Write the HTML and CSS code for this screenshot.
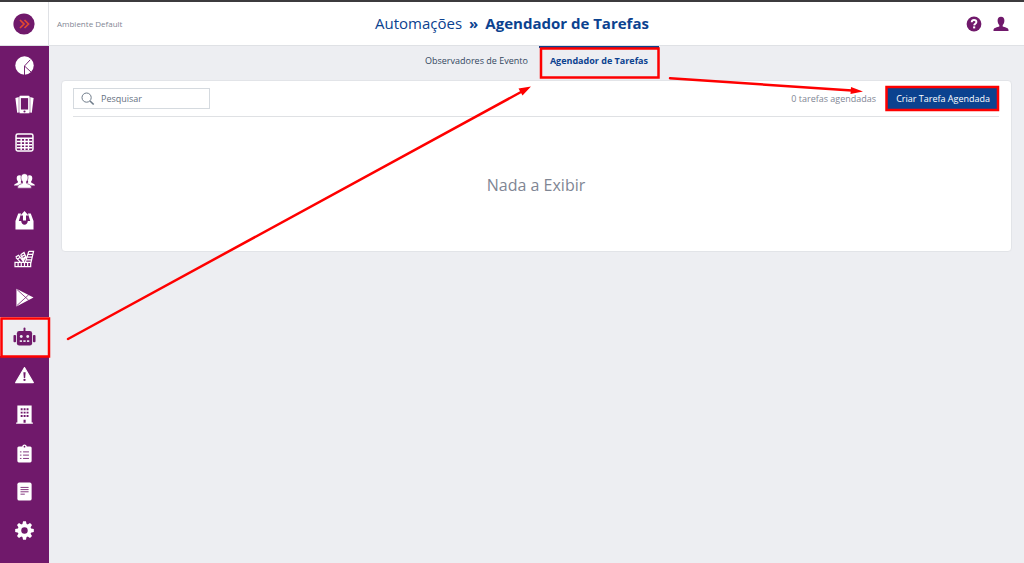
FILE: index.html
```html
<!DOCTYPE html>
<html lang="pt-BR">
<head>
<meta charset="utf-8">
<meta name="viewport" content="width=device-width, initial-scale=1">
<title>Automações » Agendador de Tarefas</title>
<link rel="stylesheet" href="styles.css">
</head>
<body>
<div class="app">
  <header class="topbar">
    <a class="logo" href="#" aria-label="Início">
      <svg width="22" height="22" viewBox="0 0 22 22"><circle cx="11" cy="11" r="10.6" fill="#70196b"/><path d="M7 7l4 4-4 4M11.500 7l4 4-4 4" fill="none" stroke="#e2492f" stroke-width="1.700"/></svg>
    </a>
    <span class="environment">Ambiente Default</span>
    <h1 class="title"><span>Automações</span><b>»</b><b>Agendador de Tarefas</b></h1>
    <div class="account">
      <button class="icon-button" aria-label="Ajuda">
        <svg width="16" height="16" viewBox="0 0 16 16"><circle cx="8" cy="8" r="7.400" fill="#70196b"/><path d="M5.700 6.200C5.800 4.700 6.700 4 8 4c1.400 0 2.400.8 2.400 2.100 0 1.700-2.100 1.700-2.200 3.300" fill="none" stroke="#fff" stroke-width="1.900"/><rect x="7.100" y="10.400" width="2.100" height="2" fill="#fff"/></svg>
      </button>
      <button class="icon-button" aria-label="Minha conta">
        <svg width="16" height="16" viewBox="0 0 16 16"><path d="M8 .8c2.300 0 3.400 1.400 3.400 3.700 0 2-.8 3.500-1.700 4.500v1.500c1.800.8 5.800 1.200 5.800 3.500v1H.5v-1c0-2.300 4-2.700 5.800-3.500V9C5.400 8 4.600 6.500 4.600 4.500 4.600 2.200 5.700.8 8 .8z" fill="#70196b"/></svg>
      </button>
    </div>
  </header>

  <nav class="sidebar" aria-label="Principal">
    <a class="nav-item" href="#" aria-label="Painel"><svg viewBox="0 0 20 20"><circle cx="10" cy="10" r="9.700" fill="#fff"/><path d="M10 20v-9.500L16 4M10.500 11l6.500 6" fill="none" stroke="#70196b" stroke-width="1"/></svg></a>
    <a class="nav-item" href="#" aria-label="Dispositivos"><svg viewBox="0 0 20 20"><path d="M.4 3.200L4.200 2v16.300l-1.900.4zM19.600 3.200L15.800 2v16.300l1.900.4z" fill="#fff"/><rect x="4.200" y=".4" width="11.600" height="19.200" rx="1.800" fill="#fff" stroke="#70196b" stroke-width=".5"/><rect x="6.200" y="3.300" width="7.600" height="12" fill="#70196b"/><circle cx="10" cy="17.400" r="1.100" fill="#70196b"/></svg></a>
    <a class="nav-item" href="#" aria-label="Tabelas"><svg viewBox="0 0 20 20"><rect x="1.100" y="1.100" width="17.800" height="17.800" rx="1.800" fill="none" stroke="#fff" stroke-width="1.600"/><path d="M1 5.600h18M2 9h16M2 12.300h16M2 15.600h16M6.500 5.500V18M10.300 5.500V18M14.200 5.500V18" stroke="#fff" stroke-width="1.500"/></svg></a>
    <a class="nav-item" href="#" aria-label="Usuários"><svg class="wide" viewBox="0 0 22 20"><g fill="#fff"><path d="M5.600 3.500c1.900 0 2.800 1.200 2.800 3 0 1.600-.6 2.600-1.200 3.300V11c1 .7 3.100 1 3.100 3.300H0c0-2.100 3-2.300 4-3.300V9.800C3.400 9.100 2.800 8.100 2.800 6.500c0-1.800.9-3 2.800-3z"/><path d="M16.400 3.500c-1.900 0-2.800 1.200-2.800 3 0 1.600.6 2.600 1.200 3.300V11c-1 .7-3.100 1-3.100 3.300H22c0-2.100-3-2.300-4-3.300V9.800c.6-.7 1.200-1.700 1.200-3.300 0-1.800-.9-3-2.800-3z"/><path d="M11 1.800c2.500 0 3.700 1.600 3.700 4 0 2-.8 3.400-1.600 4.200v1.800c1.300 1 5.100 1.300 5.100 4v1.200H3.800v-1.200c0-2.700 3.800-3 5.100-4V10c-.8-.8-1.600-2.200-1.600-4.200 0-2.400 1.200-4 3.700-4z" stroke="#70196b" stroke-width=".6"/></g></svg></a>
    <a class="nav-item" href="#" aria-label="Envios"><svg viewBox="0 0 20 20"><path d="M3.400 2.500h3L4 10.500h2.500c.5 2.700 1.500 4 3.500 4s3-1.300 3.500-4H16l-2.400-8h3l2.900 8V19.500H.5v-9z" fill="#fff"/><path d="M10 0l4.200 4.700h-2.600v5.300H8.400V4.700H5.800z" fill="#fff"/></svg></a>
    <a class="nav-item" href="#" aria-label="Temas"><svg class="wide" viewBox="0 0 22 20"><path d="M1 13h16.500v4.500H1zM4.300 13v4.500M7.600 13v4.500M11 13v4.500M14.300 13v4.500M1.700 7.500l3-2 5.500 7M2 8l4.500 4.500M3.200 9.800l3-2M7 5l3.500-2.500 2 5-3 4M7 5l3.500 7M8 7l3.300-2M9 9.500l3-2.500M15.500 1.500h5l-3 13M15.500 1.500l-3.500 11M15 4.500h4.500M14.200 7.500h4.500M13.200 10.500H18" fill="none" stroke="#fff" stroke-width="1.300"/></svg></a>
    <a class="nav-item" href="#" aria-label="Loja"><svg viewBox="0 0 20 20"><path d="M1.500.7l18 9.300-18 9.500z" fill="#fff"/><path d="M2 1.500l12.500 11.500M2 18.500L14.500 7" stroke="#70196b" stroke-width=".8"/></svg></a>
    <a class="nav-item nav-item-active" href="#" aria-label="Automações" aria-current="page"><svg class="bot" viewBox="0 0 24 20"><g fill="#70196b"><rect x="4" y="4.200" width="16" height="15.300" rx="2.400"/><rect x="11" y=".5" width="2" height="5" rx="1"/><rect x=".4" y="8.500" width="2.700" height="7.500" rx="1"/><rect x="20.900" y="8.500" width="2.700" height="7.500" rx="1"/></g><g fill="#edeef2"><circle cx="8.600" cy="10" r="1.500"/><circle cx="15.400" cy="10" r="1.500"/><rect x="7" y="14" width="2.400" height="1.700"/><rect x="10.800" y="14" width="2.400" height="1.700"/><rect x="14.600" y="14" width="2.400" height="1.700"/></g></svg></a>
    <a class="nav-item" href="#" aria-label="Alertas"><svg viewBox="0 0 20 20"><path d="M10 1.600L19.300 17.500H.7z" fill="#fff" stroke="#fff" stroke-width="1.200" stroke-linejoin="round"/><path d="M8.800 6.500h2.400l-.5 6H9.300z" fill="#70196b"/><circle cx="10" cy="14.700" r="1.200" fill="#70196b"/></svg></a>
    <a class="nav-item" href="#" aria-label="Empresa"><svg viewBox="0 0 20 20"><path d="M2.500.5h15v18h1.300v1.200H1.200v-1.200h1.300z" fill="#fff"/><path d="M6 3.500h2v2H6zM9.100 3.500h2v2h-2zM12.200 3.500h2v2h-2zM6 7h2v2H6zM9.100 7h2v2h-2zM12.200 7h2v2h-2zM6 10.500h2v2H6zM9.100 10.500h2v2h-2zM12.200 10.500h2v2h-2zM9 15.500h2.200v3.200H9z" fill="#70196b"/></svg></a>
    <a class="nav-item" href="#" aria-label="Tarefas"><svg viewBox="0 0 20 20"><path d="M4 2.500h3.500a2.600 2.600 0 015 0H16A1.600 1.600 0 0117.500 4v14a1.600 1.600 0 01-1.500 1.500H4A1.600 1.600 0 012.500 18V4A1.600 1.600 0 014 2.500z" fill="#fff"/><circle cx="10" cy="2.800" r=".9" fill="#70196b"/><path d="M5.200 8.300h1.600M8.500 8.300h6.200M5.200 11.700h1.600M8.500 11.700h6.200M5.200 15.200h1.600M8.500 15.200h6.200" stroke="#70196b" stroke-width=".9"/></svg></a>
    <a class="nav-item" href="#" aria-label="Documentos"><svg viewBox="0 0 20 20"><rect x="2.500" y=".5" width="15" height="19" rx="2" fill="#fff"/><path d="M5.800 5.700h8.500M5.800 8h8.500M5.800 10.300h8.500M5.800 12.800h4.500" stroke="#70196b" stroke-width=".9"/></svg></a>
    <a class="nav-item" href="#" aria-label="Configurações"><svg viewBox="0 0 20 20"><g fill="#fff"><circle cx="10" cy="10" r="7.200"/><path d="M8.500.2h3l1 4.300h-5zM8.500 19.800h3l1-4.300h-5zM.2 8.500v3l4.300 1v-5zM19.800 8.500v3l-4.300 1v-5zM2.100 4.200l2.100-2.100 3.700 2.300-3.500 3.500zM17.900 15.800l-2.100 2.100-3.700-2.300 3.500-3.500zM15.800 2.100l2.100 2.100-2.300 3.700-3.500-3.500zM4.200 17.900l-2.100-2.100 2.300-3.700 3.500 3.500z"/></g><circle cx="10" cy="10" r="3.400" fill="#70196b"/></svg></a>
  </nav>

  <main class="content">
    <nav class="tabs" aria-label="Automações">
      <a class="tab" href="#">Observadores de Evento</a>
      <a class="tab tab-active" href="#" aria-current="page">Agendador de Tarefas</a>
    </nav>
    <section class="card">
      <div class="toolbar">
        <label class="search">
          <svg width="14" height="14" viewBox="0 0 14 14" aria-hidden="true"><circle cx="5.600" cy="5.600" r="4.600" fill="none" stroke="#6f7c8a" stroke-width="1"/><path d="M9 9l3.700 3.500" stroke="#6f7c8a" stroke-width="1.600"/></svg>
          <input class="search-input" type="search" placeholder="Pesquisar" aria-label="Pesquisar">
        </label>
        <span class="count">0 tarefas agendadas</span>
        <button class="create-button">Criar Tarefa Agendada</button>
      </div>
      <p class="empty">Nada a Exibir</p>
    </section>
  </main>
</div>

<svg class="annotations" width="1024" height="563" viewBox="0 0 1024 563" aria-hidden="true">
  <g fill="none" stroke="#fe0000" stroke-width="2.500">
    <rect x="1.500" y="318.500" width="47.500" height="38"/>
    <rect x="541" y="48.500" width="117.500" height="29"/>
    <rect x="886.500" y="87" width="111.500" height="23"/>
    <path d="M68 339L521 92M670 78.300L852 90.500" stroke-linecap="round"/>
  </g>
  <path d="M531 86.500L518.500 88.500l4 7zM863 91.500l-12-4.500-.5 7z" fill="#fe0000"/>
</svg>
</body>
</html>
```
FILE: styles.css
```css
* {
  box-sizing: border-box;
}

body {
  margin: 0;
  background: #edeef2;
  color: #7f8694;
  font-family: "Open Sans", "Noto Sans", sans-serif;
  font-size: 9px;
}

a {
  color: inherit;
  text-decoration: none;
}

button {
  font: inherit;
  border: 0;
  cursor: pointer;
}

.app {
  display: grid;
  grid-template: 46px 1fr / 49px 1fr;
  min-height: 100vh;
}

.topbar {
  grid-column: 1 / -1;
  display: grid;
  grid-template-columns: 49px 1fr auto 1fr;
  align-items: center;
  background: #fff;
  border-top: 2px solid #3c3b3d;
  border-bottom: 1px solid #dfe1e5;
}

.logo {
  display: flex;
  align-items: center;
  justify-content: center;
  height: 100%;
  border-right: 1px solid #dfe1e5;
}

.environment {
  margin-left: 8px;
  font-size: 8px;
}

.title {
  display: flex;
  gap: 7px;
  margin: 0 49px 2px 0;
  color: #0b428f;
  font-size: 15px;
  font-weight: 400;
}

.title b {
  font-weight: 700;
}

.account {
  display: flex;
  justify-content: flex-end;
  gap: 11px;
  padding-right: 15px;
}

.icon-button {
  display: flex;
  padding: 0;
  background: none;
}

.sidebar {
  display: flex;
  flex-direction: column;
  padding-bottom: 13px;
  background: #70196b;
}

.nav-item {
  flex: 1;
  display: flex;
  align-items: center;
  justify-content: center;
}

.nav-item svg {
  width: 19px;
  height: 19px;
}

.nav-item .wide {
  width: 21px;
}

.nav-item .bot {
  width: 23px;
}

.nav-item-active {
  background: #edeef2;
}

.content {
  padding: 0 12px 12px;
}

.tabs {
  display: flex;
  justify-content: center;
}

.tab {
  padding: 6px 11px;
  border-top: 2px solid transparent;
  color: #33475f;
  font-size: 9px;
  line-height: 14px;
}

.tab-active {
  border-color: #0b428f;
  color: #0b428f;
  font-weight: 700;
}

.card {
  margin-top: 6px;
  padding: 5px 12px 54px 11px;
  background: #fff;
  border: 1px solid #e2e4e8;
  border-radius: 4px;
}

.toolbar {
  display: flex;
  align-items: center;
  padding-bottom: 5px;
  border-bottom: 1px solid #dfe1e4;
}

.search {
  display: flex;
  align-items: center;
  gap: 6px;
  width: 137px;
  height: 21px;
  padding: 0 7px;
  border: 1px solid #d5dadf;
}

.search svg {
  flex: none;
}

.search-input {
  flex: 1;
  min-width: 0;
  padding: 0;
  border: 0;
  outline: 0;
  background: none;
  color: #66717f;
  font: inherit;
}

.search-input::placeholder {
  color: #66717f;
  opacity: 1;
}

.count {
  margin-left: auto;
}

.create-button {
  height: 25px;
  margin-left: 11px;
  padding: 0 9px;
  background: #0b428f;
  color: #fff;
}

.empty {
  margin: 56px 0 0;
  font-size: 16px;
  line-height: 24px;
  text-align: center;
}

.annotations {
  position: absolute;
  top: 0;
  left: 0;
  pointer-events: none;
}
```
